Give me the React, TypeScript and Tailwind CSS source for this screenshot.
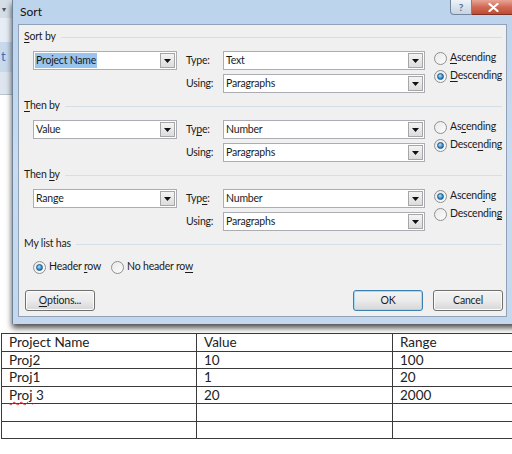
import React from "react";

// 콤보 박스 (드롭다운)
const Combo: React.FC<{ value: string; width: string; selected?: boolean }> = ({
  value,
  width,
  selected,
}) => (
  <div
    className={`flex h-[19px] shrink-0 items-stretch border border-[#abadb3] bg-white ${width}`}
  >
    <div className="flex flex-1 items-center overflow-hidden pl-[1px]">
      <span
        className={`px-[1px] leading-[15px] ${selected ? "bg-[#99c4ee]" : ""}`}
      >
        {value}
      </span>
    </div>
    <div className="m-[1px] flex w-[15px] items-center justify-center border border-[#a6a6a6] bg-gradient-to-b from-[#f4f4f4] to-[#dcdcdc]">
      <svg width="7" height="4" viewBox="0 0 7 4">
        <path d="M0 0h7L3.5 4z" fill="#111" />
      </svg>
    </div>
  </div>
);

const Radio: React.FC<{ checked?: boolean; children: React.ReactNode }> = ({
  checked,
  children,
}) => (
  <div className="flex h-[18px] shrink-0 items-center gap-[3px] whitespace-nowrap">
    <div className="flex h-[13px] w-[13px] shrink-0 items-center justify-center rounded-full border border-[#8e8f8f] bg-gradient-to-br from-[#e9e9e9] to-[#fcfcfc]">
      {checked && (
        <div className="h-[7px] w-[7px] rounded-full border border-[#1d5a87] bg-[radial-gradient(circle_at_40%_35%,#b6e2ff,#2f86c9_60%,#1a5d94)]" />
      )}
    </div>
    <span>{children}</span>
  </div>
);

const GroupHeader: React.FC<{ children: React.ReactNode }> = ({ children }) => (
  <div className="flex h-[14px] items-center pr-[2px]">
    <span>{children}</span>
    <div className="ml-[5px] h-px flex-1 bg-[#d5dfe5]" />
  </div>
);

const U: React.FC<{ children: React.ReactNode }> = ({ children }) => (
  <span className="underline underline-offset-[2px]">{children}</span>
);

type Level = {
  title: React.ReactNode;
  column: string;
  type: string;
  typeLabel: React.ReactNode;
  asc: React.ReactNode;
  desc: React.ReactNode;
  ascending: boolean;
  selected?: boolean;
};

const levels: Level[] = [
  {
    title: (
      <>
        <U>S</U>ort by
      </>
    ),
    column: "Project Name",
    type: "Text",
    typeLabel: <>Type:</>,
    asc: (
      <>
        <U>A</U>scending
      </>
    ),
    desc: (
      <>
        <U>D</U>escending
      </>
    ),
    ascending: false,
    selected: true,
  },
  {
    title: (
      <>
        <U>T</U>hen by
      </>
    ),
    column: "Value",
    type: "Number",
    typeLabel: (
      <>
        Ty<U>p</U>e:
      </>
    ),
    asc: (
      <>
        As<U>c</U>ending
      </>
    ),
    desc: (
      <>
        Desce<U>n</U>ding
      </>
    ),
    ascending: false,
  },
  {
    title: (
      <>
        Then <U>b</U>y
      </>
    ),
    column: "Range",
    type: "Number",
    typeLabel: (
      <>
        Typ<U>e</U>:
      </>
    ),
    asc: (
      <>
        Ascend<U>i</U>ng
      </>
    ),
    desc: (
      <>
        Descendin<U>g</U>
      </>
    ),
    ascending: true,
  },
];

const SortLevel: React.FC<{ level: Level; first?: boolean }> = ({ level, first }) => (
  <div className={first ? "" : "mt-[6px]"}>
    <GroupHeader>{level.title}</GroupHeader>
    <div className="mt-[7px] flex pl-[9px]">
      <Combo value={level.column} width="w-[144px]" selected={level.selected} />
      <div className="ml-[9px] grid shrink-0 grid-cols-[37px_202px] items-center gap-y-[4px]">
        <span>{level.typeLabel}</span>
        <Combo value={level.type} width="w-[202px]" />
        <span>Using:</span>
        <Combo value="Paragraphs" width="w-[202px]" />
      </div>
      <div className="-mt-[2px] ml-[9px] flex shrink-0 flex-col">
        <Radio checked={level.ascending}>{level.asc}</Radio>
        <Radio checked={!level.ascending}>{level.desc}</Radio>
      </div>
    </div>
  </div>
);

const DialogButton: React.FC<{ children: React.ReactNode; focused?: boolean }> = ({
  children,
  focused,
}) => (
  <div
    className={`flex h-[21px] w-[70px] items-center justify-center rounded-[3px] border bg-gradient-to-b from-[#f3f3f3] via-[#ebebeb] to-[#d6d6d6] ${
      focused
        ? "border-[#3c7fb1] shadow-[inset_0_0_0_1px_#a7d8f5]"
        : "border-[#707070] shadow-[inset_0_0_0_1px_#fcfcfc]"
    }`}
  >
    {children}
  </div>
);

const rows = [
  ["Project Name", "Value", "Range"],
  ["Proj2", "10", "100"],
  ["Proj1", "1", "20"],
  ["Proj 3", "20", "2000"],
  ["", "", ""],
  ["", "", ""],
];
const rowHeights = ["h-[18px]", "h-[17px]", "h-[18px]", "h-[17px]", "h-[18px]", "h-[17px]"];

const App: React.FC = () => {
  return (
    <div className="relative h-[454px] w-[512px] overflow-hidden bg-white font-['Lato',sans-serif] text-[10.5px] tracking-[-0.2px] text-[#1b1b1b]">
      <div className="flex h-[333px] w-[540px] items-start">
        {/* 뒤쪽 Word 문서 가장자리 */}
        <div className="flex h-[333px] w-[12px] shrink-0 flex-col">
          <div className="flex h-[18px] items-center bg-[#d5dde7] pl-[2px] text-[8px] text-[#4a5563]">
            ▾
          </div>
          <div className="h-[24px] bg-[#e7edf4]" />
          <div className="flex h-[30px] items-center bg-[#c9d9ec] pl-[1px] text-[13px] text-[#3a72b8]">
            t
          </div>
          <div className="h-[23px] border-b border-[#b9c4d1] bg-[#dee5ee]" />
          <div className="flex-1 bg-white" />
        </div>

        {/* Sort 대화 상자 */}
        <div className="flex h-[324px] w-[506px] shrink-0 flex-col border-l border-[#6f8297] bg-gradient-to-b from-[#bcd3ec] via-[#c9dcf0] to-[#c3d8ee] shadow-[0_4px_6px_rgba(0,0,0,0.7)]">
          <div className="flex h-[24px] items-start">
            <span className="mt-[3px] ml-[7px] text-[12px] tracking-normal text-[#111]">Sort</span>
            <div className="ml-auto mr-[2px] flex">
              <div className="flex h-[15px] w-[22px] items-center justify-center rounded-bl-[4px] border border-t-0 border-[#73869c] bg-gradient-to-b from-[#eef3f8] to-[#c5d3e2] text-[10px] font-bold text-[#5a6b80]">
                ?
              </div>
              <div className="flex h-[15px] w-[44px] items-center justify-center rounded-br-[4px] border border-l-0 border-t-0 border-[#7a3324] bg-gradient-to-b from-[#e8a597] via-[#d06a55] to-[#c24a33]">
                <svg width="11" height="9" viewBox="0 0 11 9">
                  <path
                    d="M1.5 1l8 7M9.5 1l-8 7"
                    stroke="#fff"
                    strokeWidth="2.2"
                    strokeLinecap="round"
                  />
                </svg>
              </div>
            </div>
          </div>

          <div className="ml-[5px] flex h-[293px] w-[489px] flex-col border border-[#8fa2b8] bg-[#f0f0f0] pt-[5px] pl-[5px] pr-[2px]">
            {levels.map((level, i) => (
              <SortLevel key={i} level={level} first={i === 0} />
            ))}

            <div className="mt-[6px]">
              <GroupHeader>My list has</GroupHeader>
              <div className="mt-[7px] flex gap-[10px] pl-[9px]">
                <Radio checked>
                  Header <U>r</U>ow
                </Radio>
                <Radio>
                  No header ro<U>w</U>
                </Radio>
              </div>
            </div>

            <div className="mt-[14px] flex items-center pl-[1px] pr-[1px]">
              <DialogButton>
                <U>O</U>ptions...
              </DialogButton>
              <div className="ml-auto flex gap-[10px]">
                <DialogButton focused>OK</DialogButton>
                <DialogButton>Cancel</DialogButton>
              </div>
            </div>
          </div>
        </div>
      </div>

      {/* 문서 표 */}
      <table className="ml-[1px] w-[560px] table-fixed border-collapse font-['Lato',sans-serif] text-[13.5px] tracking-normal text-[#222]">
        <colgroup>
          <col className="w-[195px]" />
          <col className="w-[196px]" />
          <col />
        </colgroup>
        <tbody>
          {rows.map((row, r) => (
            <tr key={r} className={rowHeights[r]}>
              {row.map((cell, c) => (
                <td
                  key={c}
                  className="border border-[#3a3a3a] px-[7px] py-0 align-middle leading-[15px]"
                >
                  {cell === "Proj 3" ? (
                    <>
                      <span className="underline decoration-[#e03030] decoration-wavy decoration-[1px] underline-offset-[1px]">
                        Proj
                      </span>{" "}
                      3
                    </>
                  ) : (
                    cell
                  )}
                </td>
              ))}
            </tr>
          ))}
        </tbody>
      </table>
    </div>
  );
};

export default App;
